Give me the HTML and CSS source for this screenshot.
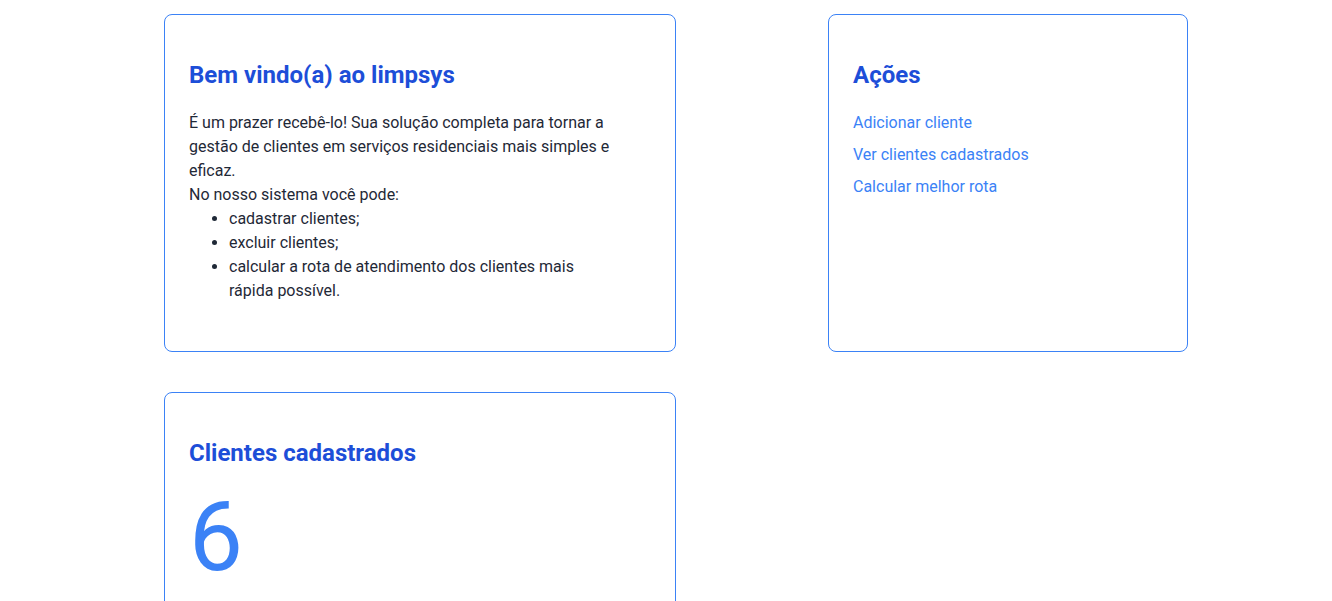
FILE: index.html
```html
<!DOCTYPE html>
<html lang="pt-BR">
<head>
<meta charset="utf-8">
<title>limpsys</title>
<link rel="stylesheet" href="styles.css">
</head>
<body>
<main class="dashboard">
  <section class="card card-welcome">
    <h2 class="card-title">Bem vindo(a) ao limpsys</h2>
    <div class="welcome-text">
      <p class="intro">É um prazer recebê-lo! Sua solução completa para tornar a gestão de clientes em serviços residenciais mais simples e eficaz.</p>
      <p class="intro">No nosso sistema você pode:</p>
      <ul class="features">
        <li>cadastrar clientes;</li>
        <li>excluir clientes;</li>
        <li>calcular a rota de atendimento dos clientes mais rápida possível.</li>
      </ul>
    </div>
  </section>
  <section class="card card-actions">
    <h2 class="card-title">Ações</h2>
    <nav class="actions">
      <a class="action-link" href="#">Adicionar cliente</a>
      <a class="action-link" href="#">Ver clientes cadastrados</a>
      <a class="action-link" href="#">Calcular melhor rota</a>
    </nav>
  </section>
  <section class="card card-count">
    <h2 class="card-title">Clientes cadastrados</h2>
    <p class="count">6</p>
  </section>
</main>
</body>
</html>
```
FILE: styles.css
```css
* { box-sizing: border-box; }
html, body { margin: 0; padding: 0; background: #ffffff; }
body {
  font-family: Roboto, "Noto Sans", sans-serif;
  font-size: 16px;
  line-height: 24px;
  color: #1f2937;
}
.dashboard {
  display: grid;
  grid-template-columns: 512px 360px;
  column-gap: 152px;
  row-gap: 40px;
  align-items: start;
  padding: 14px 0 0 164px;
}
.card {
  border: 1px solid #3b82f6;
  border-radius: 8px;
  padding: 24px;
  background: #fff;
}
.card-welcome, .card-actions { height: 338px; }
.card-title {
  margin: 20px 0 20px;
  font-size: 24px;
  line-height: 32px;
  font-weight: 700;
  color: #1d4ed8;
}
.welcome-text { max-width: 432px; }
.intro { margin: 0; }
.features {
  margin: 0;
  padding-left: 40px;
}
.actions {
  display: flex;
  flex-direction: column;
  gap: 8px;
  align-items: flex-start;
}
.action-link {
  color: #3b82f6;
  text-decoration: none;
}
.count {
  margin: 0;
  font-size: 96px;
  line-height: 96px;
  color: #3b82f6;
}
```
